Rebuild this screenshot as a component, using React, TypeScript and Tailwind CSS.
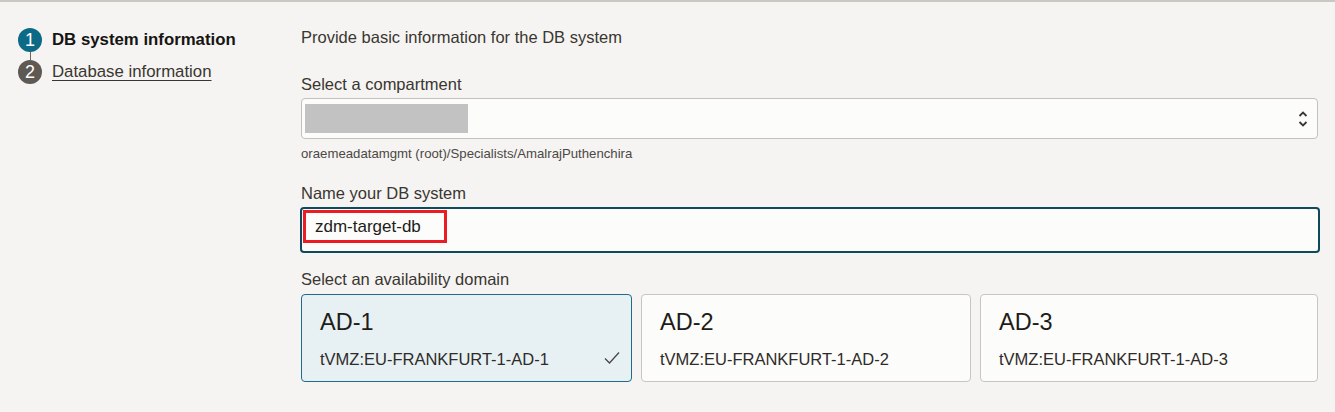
import React from "react";

const font = { fontFamily: '"Liberation Sans", Arial, sans-serif' };

function Card({ title, sub, selected }: { title: string; sub: string; selected?: boolean }) {
  return (
    <div
      className={
        "relative h-[88px] rounded-[4px] border px-[18px] pt-[12px] " +
        (selected ? "border-[#1d6c8a] bg-[#e7f1f4]" : "border-[#c9c5c0] bg-[#fcfcfb]")
      }
    >
      <div className="text-[23.5px] leading-[30px] text-[#1f1c19]">{title}</div>
      <div className="mt-[12px] text-[16.5px] leading-[20px] text-[#2f2b28]">{sub}</div>
      {selected && (
        <svg className="absolute right-[10px] top-[55px]" width="18" height="16" viewBox="0 0 18 16" fill="none">
          <path d="M2 8.5 L6.5 13 L16 2.5" stroke="#4a4642" strokeWidth="1.3" />
        </svg>
      )}
    </div>
  );
}

export default function App() {
  return (
    <div className="h-[412px] w-[1335px] overflow-hidden border-t-2 border-[#cbc7c2] bg-[#f5f4f2]" style={font}>
      <div className="flex">
        <div className="w-[301px] shrink-0 pl-[18px] pt-[26px]">
          <div className="flex items-center">
            <div className="flex h-[24px] w-[24px] items-center justify-center rounded-full bg-[#0c6a87] text-[18px] text-white">1</div>
            <div className="ml-[10px] text-[16.8px] font-bold leading-[24px] text-[#161513]">DB system information</div>
          </div>
          <div className="ml-[12px] h-[8px] w-px bg-[#6b6560]" />
          <div className="flex items-center">
            <div className="flex h-[24px] w-[24px] items-center justify-center rounded-full bg-[#5f5954] text-[18px] text-white">2</div>
            <div className="ml-[10px] text-[16.8px] leading-[24px] text-[#3a3631] underline underline-offset-[3px]">Database information</div>
          </div>
        </div>
        <div className="w-[1017px] pt-[25px]">
          <div className="text-[16.5px] leading-[20px] text-[#3a3631]">Provide basic information for the DB system</div>
          <div className="mt-[27px] text-[16.5px] leading-[20px] text-[#3a3631]">Select a compartment</div>
          <div className="mt-[4px] flex h-[41px] items-center justify-between rounded-[4px] border border-[#c4c0bb] bg-[#fcfcfb] pl-[3px] pr-[8px]">
            <div className="h-[29px] w-[163px] bg-[#c2c2c2]" />
            <svg width="12" height="20" viewBox="0 0 12 20" fill="none">
              <path d="M2.5 7 L6 3.5 L9.5 7" stroke="#3a3631" strokeWidth="1.8" />
              <path d="M2.5 13 L6 16.5 L9.5 13" stroke="#3a3631" strokeWidth="1.8" />
            </svg>
          </div>
          <div className="mt-[7px] text-[13.2px] leading-[16px] text-[#4c4844]">oraemeadatamgmt (root)/Specialists/AmalrajPuthenchira</div>
          <div className="mt-[21px] text-[16.5px] leading-[20px] text-[#3a3631]">Name your DB system</div>
          <div className="ml-[-1px] mr-[-2px] mt-[4px] h-[46px] rounded-[4px] border-[2.5px] border-[#0e4a5e] bg-[#fcfcfb] pl-[1px] pt-[1px]">
            <div className="flex h-[33px] w-[144px] items-center border-[3px] border-[#ec1c24] pl-[9px] text-[17px] text-[#1f1c19]">zdm-target-db</div>
          </div>
          <div className="mt-[16px] text-[16.5px] leading-[20px] text-[#3a3631]">Select an availability domain</div>
          <div className="mt-[5px] grid grid-cols-[331px_330px_338px] gap-[9px]">
            <Card title="AD-1" sub="tVMZ:EU-FRANKFURT-1-AD-1" selected />
            <Card title="AD-2" sub="tVMZ:EU-FRANKFURT-1-AD-2" />
            <Card title="AD-3" sub="tVMZ:EU-FRANKFURT-1-AD-3" />
          </div>
        </div>
      </div>
    </div>
  );
}
